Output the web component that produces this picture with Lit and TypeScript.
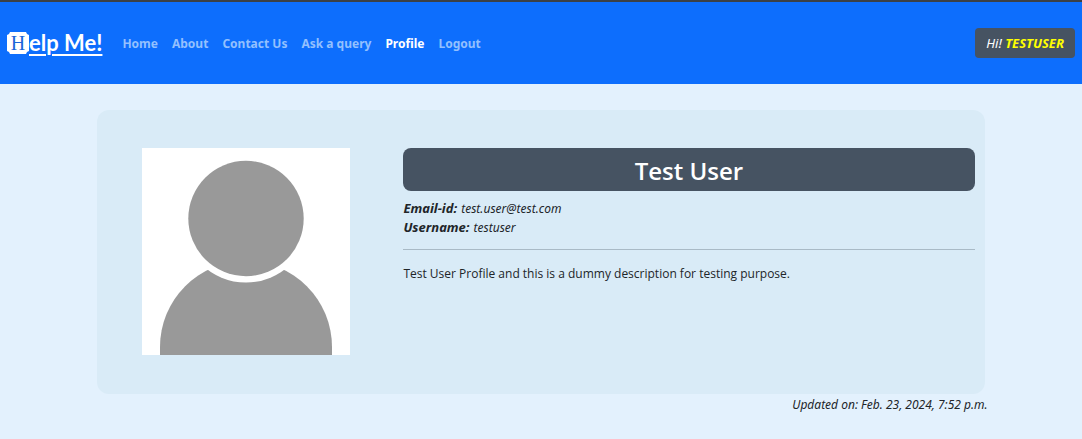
import { LitElement, html, css } from "lit";
import { customElement, property } from "lit/decorators.js";
import { classMap } from "lit/directives/class-map.js";

@customElement("site-navbar")
class SiteNavbar extends LitElement {
  @property() active = "Profile";
  @property() user = "";

  private links = ["Home", "About", "Contact Us", "Ask a query", "Profile", "Logout"];

  static styles = css`
    :host {
      display: block;
      font-family: "Noto Sans", "Open Sans", sans-serif;
    }
    .bar {
      display: flex;
      align-items: center;
      min-height: 82px;
      padding: 0 7px;
      border-top: 2px solid #3b4045;
      background: #0d6efd;
    }
    .brand {
      display: flex;
      align-items: center;
      margin-right: 20px;
      color: #fff;
      font: 700 22px/28px Lato, sans-serif;
      text-decoration: none;
    }
    .initial {
      width: 22px;
      background: #fff;
      clip-path: polygon(
        3px 0, 19px 0, 20px 2px, 22px 3px, 22px 19px, 20px 20px,
        19px 22px, 3px 22px, 2px 20px, 0 19px, 0 3px, 2px 2px
      );
      color: #1a66d8;
      font: 400 20px/22px "Liberation Serif", serif;
      text-align: center;
    }
    .rest {
      text-decoration: underline;
      text-decoration-thickness: 2px;
      text-underline-offset: 3px;
    }
    .links {
      display: flex;
      gap: 14px;
      margin: 0;
      padding: 0;
      list-style: none;
    }
    .link {
      color: #93c0fe;
      font-weight: 700;
      text-decoration: none;
      white-space: nowrap;
    }
    .link.active {
      color: #fff;
    }
    .greeting {
      margin-left: auto;
      padding: 5px 11px;
      border-radius: 4px;
      background: #465362;
      color: #fff;
      font-size: 13px;
      font-style: italic;
      line-height: 20px;
      white-space: nowrap;
    }
    .name {
      color: #ff0;
      font-weight: 700;
    }
  `;

  render() {
    return html`
      <nav class="bar" aria-label="Main">
        <a class="brand" href="#" aria-label="Help Me!"
          ><span class="initial">H</span><span class="rest">elp Me!</span></a
        >
        <ul class="links">
          ${this.links.map(
            (label) => html`<li>
              <a href="#" class=${classMap({ link: true, active: label === this.active })}>${label}</a>
            </li>`
          )}
        </ul>
        <span class="greeting">Hi! <span class="name">${this.user}</span></span>
      </nav>
    `;
  }
}

@customElement("app-root")
class AppRoot extends LitElement {
  static styles = css`
    :host {
      display: block;
      min-height: 100vh;
      background: #e3f1fd;
      color: #212529;
      font: 400 12px/19px "Open Sans", "Noto Sans", sans-serif;
    }
    .page {
      width: 82%;
      margin: 0 auto;
      padding-top: 26px;
    }
    .card {
      display: grid;
      grid-template-columns: 208px 1fr;
      gap: 53px;
      padding: 38px 10px 39px 45px;
      border-radius: 12px;
      background: #d9ebf7;
    }
    .avatar {
      display: block;
      width: 100%;
      background: #fff;
    }
    .title {
      margin: 0 0 8px;
      padding: 6px 0 4px;
      border-radius: 8px;
      background: #465362;
      color: #fff;
      font-size: 24px;
      font-weight: 600;
      line-height: 33px;
      text-align: center;
    }
    .facts,
    .updated {
      font-family: "Noto Sans", "Open Sans", sans-serif;
      font-style: italic;
    }
    .facts {
      margin: 0;
    }
    .fact {
      display: flex;
      align-items: baseline;
      gap: 4px;
    }
    .fact dt {
      font-size: 13px;
      font-weight: 700;
    }
    .fact dd {
      margin: 0;
    }
    .rule {
      margin: 12px 0 14px;
      border: 0;
      border-top: 1px solid #a9bac6;
    }
    .about {
      margin: 0;
    }
    .updated {
      margin: 1px -3px 0 0;
      text-align: right;
    }
  `;

  render() {
    return html`
      <site-navbar user="TESTUSER"></site-navbar>
      <main class="page">
        <section class="card">
          <svg class="avatar" viewBox="0 0 208 207" role="img" aria-label="Profile picture">
            <path d="M18 207v-8a86 86 0 0 1 172 0v8z" fill="#999" />
            <circle cx="104" cy="70.500" r="64" fill="#fff" />
            <circle cx="104" cy="70.500" r="57.700" fill="#999" />
          </svg>
          <div>
            <h1 class="title">Test User</h1>
            <dl class="facts">
              <div class="fact"><dt>Email-id:</dt><dd>test.user@test.com</dd></div>
              <div class="fact"><dt>Username:</dt><dd>testuser</dd></div>
            </dl>
            <hr class="rule" />
            <p class="about">Test User Profile and this is a dummy description for testing purpose.</p>
          </div>
        </section>
        <p class="updated">Updated on: Feb. 23, 2024, 7:52 p.m.</p>
      </main>
    `;
  }
}
